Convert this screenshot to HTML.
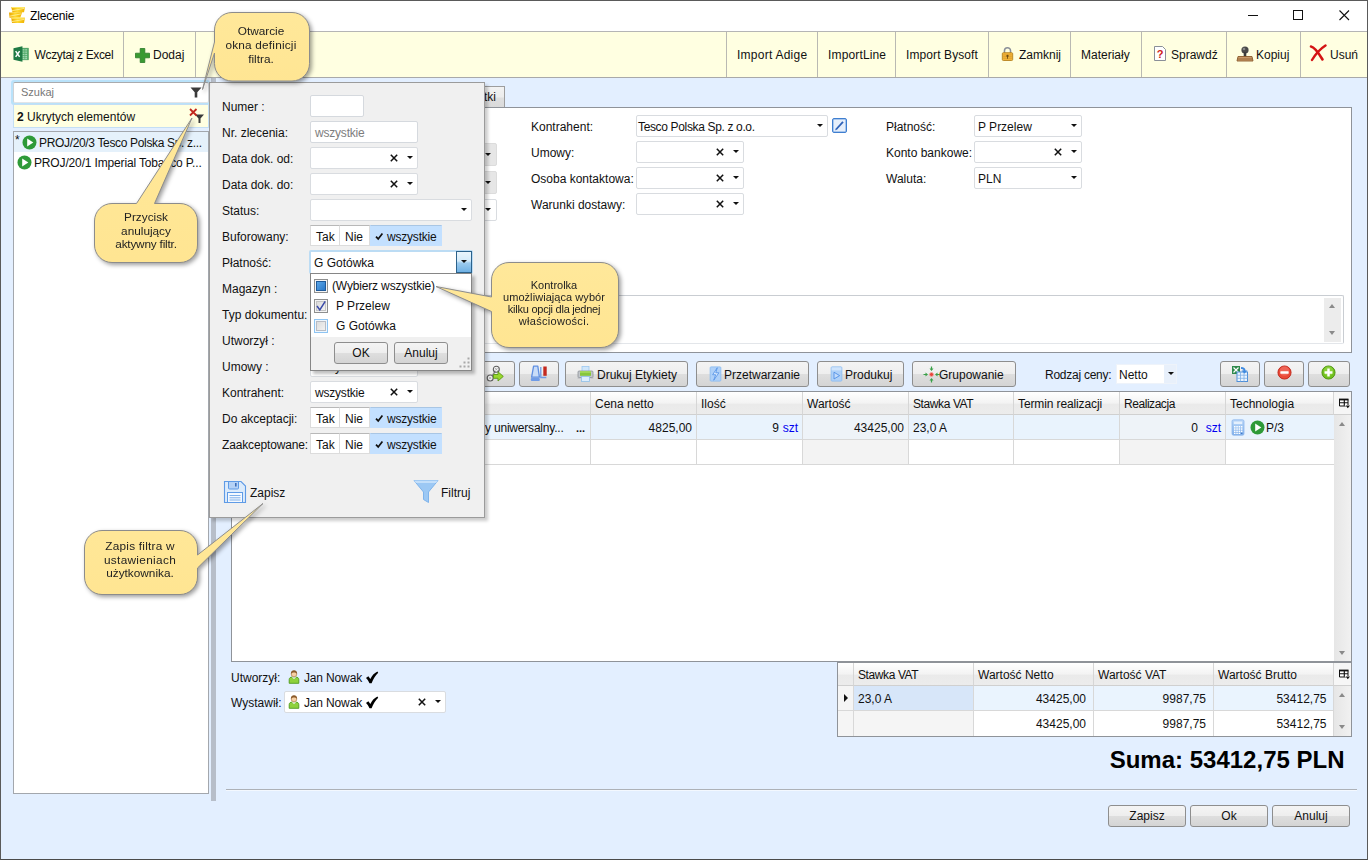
<!DOCTYPE html>
<html><head><meta charset="utf-8"><title>Zlecenie</title>
<style>
*{box-sizing:border-box;margin:0;padding:0}
html,body{width:1368px;height:860px;overflow:hidden}
body{font-family:"Liberation Sans",sans-serif;font-size:12px;color:#111;background:#e3efff;position:relative}
.a{position:absolute}
.t{position:absolute;white-space:nowrap;line-height:14px;height:14px}
#win{position:absolute;left:0;top:0;width:1368px;height:860px;border:1px solid #5a5a5a;border-bottom-color:#4a4a4a;pointer-events:none;z-index:50}
#title{position:absolute;left:0;top:0;width:1368px;height:31px;background:#fff}
#tb{position:absolute;left:0;top:31px;width:1368px;height:47px;background:#ffffe1;border-top:1px solid #b5b5b5;border-bottom:1px solid #a9a9a9}
.sep{position:absolute;top:0;width:1px;height:45px;background:#b9b9b3}
.inp{position:absolute;background:#fff;border:1px solid #d5d9de;border-radius:2px}
.cmb{position:absolute;background:#fff;border:1px solid #d9dce0;border-radius:2px}
.arr{position:absolute;width:0;height:0;margin-left:.5px;border-left:3px solid transparent;border-right:3px solid transparent;border-top:3.6px solid #111}
.x{position:absolute;width:10px;height:10px;padding:1px}
.btn{position:absolute;border:1px solid #8e8e8e;border-radius:3px;background:linear-gradient(#f4f4f4 0,#eeeeee 48%,#dedede 52%,#d4d4d4 100%)}
.seg{position:absolute;height:21px;background:#fff;border:1px solid #dcdcdc;border-top-color:#b8b8b8}
.seg.on{background:#c3e0ff;border-color:#c3e0ff;border-top-color:#a9c6e4}
.hd{position:absolute;height:23px;background:linear-gradient(#ffffff 0,#f3f3f3 50%,#eaeaea 56%,#ececec 100%);border-right:1px solid #d6d6d6;border-bottom:1px solid #d0d0d0}
.cell{position:absolute;border-right:1px solid #d8d8d8;border-bottom:1px solid #d8d8d8}
.co{position:absolute;text-align:center;font-size:12px;line-height:13.3px;color:#222;white-space:nowrap;will-change:transform}
</style></head><body>

<!-- ===== title bar ===== -->
<div id="title">
 <svg class="a" style="left:8px;top:6px" width="18" height="18" viewBox="0 0 18 18">
  <defs><linearGradient id="gz" x1="0" y1="0" x2="1" y2="0"><stop offset="0" stop-color="#e9a400"/><stop offset=".45" stop-color="#ffd92e"/><stop offset="1" stop-color="#efb000"/></linearGradient></defs>
  <path d="M3.200 1 H17 L16 6.300 L4.500 6.500z" fill="url(#gz)"/>
  <path d="M1 6.500 L14.200 6.200 L12.300 11.600 L1.500 11.700z" fill="url(#gz)"/>
  <path d="M3.200 11.600 L17 11.800 L16 17 H4z" fill="url(#gz)"/>
  <path d="M3.500 4.800 L16.500 2.300M1.500 10.200 L13.500 7.800M3.800 15.600 L16.500 13.300" stroke="#fff3a0" stroke-width="1" opacity=".8"/>
  <path d="M3.200 1H17l-.2 1H3.500zM3.200 11.600l13.800.2-.2 1H3.400z" fill="#ffe868"/>
 </svg>
 <div class="t" style="left:30px;top:9px;color:#000;letter-spacing:-.12px">Zlecenie</div>
 <div class="a" style="left:1248px;top:15px;width:10px;height:1px;background:#111"></div>
 <div class="a" style="left:1293px;top:10px;width:10px;height:10px;border:1px solid #111"></div>
 <svg class="a" style="left:1339px;top:10px" width="11" height="11" viewBox="0 0 11 11"><path d="M0.5 0.5 L10 10 M10 0.5 L0.5 10" stroke="#111" stroke-width="1.1" fill="none"/></svg>
</div>

<!-- ===== toolbar ===== -->
<div id="tb">
 <div class="sep" style="left:123px"></div><div class="sep" style="left:195px"></div>
 <div class="sep" style="left:726px"></div><div class="sep" style="left:817px"></div><div class="sep" style="left:895px"></div>
 <div class="sep" style="left:988px"></div><div class="sep" style="left:1070px"></div><div class="sep" style="left:1141px"></div>
 <div class="sep" style="left:1226px"></div><div class="sep" style="left:1300px"></div>
 <!-- excel icon -->
 <svg class="a" style="left:13px;top:14px" width="16" height="16" viewBox="0 0 17 17">
  <rect x="8" y="2.300" width="8.300" height="12.400" fill="#4ea866" stroke="#3c9456" stroke-width=".6"/>
  <path d="M10 4.200h5M10 6.600h5M10 9h5M10 11.400h5M10 13.400h5" stroke="#a5d8b2" stroke-width="1.400"/>
  <path d="M12.500 3v11" stroke="#4ea866" stroke-width=".7"/>
  <path d="M0.500 2.300 L10 0.300 V16.700 L0.500 14.700 Z" fill="#1f7a44"/>
  <path d="M2.800 5.500 L7 11.600 M7 5.500 L2.800 11.600" stroke="#fff" stroke-width="1.600"/>
 </svg>
 <div class="t" style="left:34.500px;top:16px;letter-spacing:-.35px">Wczytaj z Excel</div>
 <svg class="a" style="left:135px;top:16px" width="15" height="15" viewBox="0 0 15 15"><path d="M5.2 0.5h4.6v4.7h4.7v4.6h-4.7v4.7H5.2V9.8H0.5V5.2h4.7z" fill="#3a9a32" stroke="#2a7a28" stroke-width=".8"/></svg>
 <div class="t" style="left:153px;top:16px">Dodaj</div>
 <div class="t" style="left:737px;top:16px;letter-spacing:.25px">Import Adige</div>
 <div class="t" style="left:828px;top:16px;letter-spacing:.15px">ImportLine</div>
 <div class="t" style="left:906px;top:16px;letter-spacing:.1px">Import Bysoft</div>
 <!-- lock -->
 <svg class="a" style="left:1001px;top:14px" width="13" height="16" viewBox="0 0 15 18">
  <path d="M4 8 V5.2 a3.5 3.5 0 0 1 7 0 V8" fill="none" stroke="#8a8f98" stroke-width="1.8"/>
  <rect x="1.5" y="7.5" width="12" height="9" rx="1.2" fill="#f2b43a" stroke="#b57f1c" stroke-width="1"/>
  <path d="M2.5 10h10M2.5 12h10M2.5 14h10" stroke="#d99a28" stroke-width=".8"/>
  <circle cx="7.5" cy="11.3" r="1.3" fill="#6b4a10"/><rect x="7" y="11.5" width="1" height="3" fill="#6b4a10"/>
 </svg>
 <div class="t" style="left:1019px;top:16px">Zamknij</div>
 <div class="t" style="left:1081px;top:16px">Materiały</div>
 <!-- help doc -->
 <svg class="a" style="left:1153px;top:13px" width="14" height="17" viewBox="0 0 14 17">
  <path d="M1.5 1.5h8l3 3v11h-11z" fill="#fff" stroke="#8a8f98" stroke-width="1"/>
  <text x="7" y="12.5" font-family="Liberation Sans" font-weight="bold" font-size="11" fill="#d01818" text-anchor="middle">?</text>
 </svg>
 <div class="t" style="left:1171px;top:16px">Sprawdź</div>
 <!-- stamp -->
 <svg class="a" style="left:1236px;top:13px" width="18" height="18" viewBox="0 0 18 18">
  <circle cx="9" cy="5" r="3.6" fill="#4a4a4a"/><circle cx="8" cy="4" r="1.3" fill="#8a8a8a"/>
  <rect x="7.7" y="7" width="2.6" height="5" fill="#3c3c3c"/>
  <path d="M2 11.5h14l1 4.5H1z" fill="#c99a6a" stroke="#8a5a2a" stroke-width=".9"/>
  <path d="M1.5 14h15" stroke="#8a5a2a" stroke-width=".8"/>
 </svg>
 <div class="t" style="left:1256px;top:16px">Kopiuj</div>
 <!-- red X -->
 <svg class="a" style="left:1309px;top:12px" width="19" height="18" viewBox="0 0 19 18">
  <path d="M2 2.5 C5 3 9 8 13.5 15.5" stroke="#d41414" stroke-width="2.6" fill="none" stroke-linecap="round"/>
  <path d="M16.5 1.5 C11 5 6 11 3 16" stroke="#d41414" stroke-width="2.4" fill="none" stroke-linecap="round"/>
 </svg>
 <div class="t" style="left:1330px;top:16px">Usuń</div>
</div>

<!-- ===== left panel ===== -->
<div class="a" style="left:11px;top:80px;width:199px;height:25px;background:#b9e2fa;border-radius:3px"></div>
<div class="a" style="left:13px;top:82px;width:196px;height:21px;background:#fff;border:1px solid #cfd2d6;border-top-color:#a9abae;border-bottom-color:#e2e4e8;border-radius:2px"></div>
<div class="t" style="left:21px;top:85px;color:#777;font-size:11px">Szukaj</div>
<svg class="a" style="left:190px;top:87px" width="12" height="11" viewBox="0 0 12 11"><path d="M0.5 0.5h11L7.3 5.2V10.5H4.7V5.2z" fill="#3a3a3a"/></svg>
<div class="a" style="left:13px;top:104px;width:196px;height:24px;background:#ffffe1;border:1px solid #c4def4"></div>
<div class="t" style="left:17px;top:110px"><b>2</b> Ukrytych elementów</div>
<svg class="a" style="left:189px;top:108px" width="16" height="16" viewBox="0 0 16 16">
 <path d="M6 6.5h9L11.5 10.5V15h-2V10.5z" fill="#3a3a3a"/>
 <path d="M1 1 L7.500 7.500 M7.500 1 L1 7.500" stroke="#c2281e" stroke-width="1.800"/>
</svg>
<div class="a" style="left:13px;top:131px;width:196px;height:663px;background:#fff;border:1px solid #a3a7ad"></div>
<div class="a" style="left:14px;top:132px;width:194px;height:20px;background:#e5f1fb"></div>
<div class="t" style="left:15px;top:133px">*</div>
<svg class="a" style="left:22px;top:135px" width="15" height="15" viewBox="0 0 15 15"><circle cx="7.5" cy="7.5" r="7" fill="#2e9a38"/><path d="M5.2 3.6 L11.3 7.5 L5.2 11.4 Z" fill="#fff"/></svg>
<div class="t" style="left:39px;top:136px;letter-spacing:-.34px">PROJ/20/3 Tesco Polska Sp. z...</div>
<svg class="a" style="left:17px;top:154.500px" width="15" height="15" viewBox="0 0 15 15"><circle cx="7.5" cy="7.5" r="7" fill="#2e9a38"/><path d="M5.2 3.6 L11.3 7.5 L5.2 11.4 Z" fill="#fff"/></svg>
<div class="t" style="left:34px;top:156px;letter-spacing:-.15px">PROJ/20/1 Imperial Tobacco P...</div>
<!-- splitter -->
<div class="a" style="left:211px;top:78px;width:5px;height:723px;background:#b7bec9"></div>

<!--MAIN-S-->
<!-- ===== main area ===== -->
<!-- tab -->
<div class="a" style="left:440px;top:86px;width:65px;height:22px;background:linear-gradient(#f2f2f2 0,#ececec 48%,#dfdfdf 52%,#dadada 100%);border:1px solid #9d9d9d;border-bottom:none"></div>
<div class="t" style="left:484px;top:90px">tki</div>
<!-- white form panel -->
<div class="a" style="left:231px;top:107px;width:1121px;height:246px;background:#fff;border:1px solid #8f9399"></div>
<!-- hidden combos peeking -->
<div class="a" style="left:400px;top:143px;width:97px;height:23px;background:#e6e6e6;border:1px solid #dcdcdc;border-radius:2px"></div><div class="arr" style="left:484px;top:153px"></div>
<div class="a" style="left:400px;top:171px;width:97px;height:23px;background:#e6e6e6;border:1px solid #dcdcdc;border-radius:2px"></div><div class="arr" style="left:484px;top:181px"></div>
<div class="cmb" style="left:400px;top:199px;width:97px;height:22px"></div><div class="arr" style="left:484px;top:208px"></div>
<!-- labels col 1 -->
<div class="t" style="left:531px;top:120px">Kontrahent:</div>
<div class="t" style="left:531px;top:146px">Umowy:</div>
<div class="t" style="left:531px;top:172px">Osoba kontaktowa:</div>
<div class="t" style="left:531px;top:198px">Warunki dostawy:</div>
<div class="cmb" style="left:636px;top:115px;width:192px;height:22px"></div>
<div class="t" style="left:638px;top:120px;letter-spacing:-.35px">Tesco Polska Sp. z o.o.</div>
<div class="arr" style="left:816px;top:124px"></div>
<div class="a" style="left:832px;top:118px;width:15px;height:15px;background:#e6effb;border:1px solid #3f7fd0;border-radius:2px;box-shadow:inset 0 0 0 .5px #6fa0e0"></div>
<svg class="a" style="left:832px;top:118px" width="15" height="15" viewBox="0 0 15 15"><path d="M4 11.5 L11 3.8" stroke="#2f62b8" stroke-width="1.8"/><path d="M3.2 12.3 l1.4-.4 -1-1z" fill="#2f62b8"/></svg>
<!-- Umowy/Osoba/Warunki combos -->
<div class="cmb" style="left:636px;top:141px;width:108px;height:22px"></div>
<div class="cmb" style="left:636px;top:167px;width:108px;height:22px"></div>
<div class="cmb" style="left:636px;top:193px;width:108px;height:22px"></div>
<svg class="x" style="left:715px;top:147px" viewBox="0 0 10 10"><path d="M1 1L9 9M9 1L1 9" stroke="#111" stroke-width="1.9"/></svg><div class="arr" style="left:732px;top:150px"></div>
<svg class="x" style="left:715px;top:173px" viewBox="0 0 10 10"><path d="M1 1L9 9M9 1L1 9" stroke="#111" stroke-width="1.9"/></svg><div class="arr" style="left:732px;top:176px"></div>
<svg class="x" style="left:715px;top:199px" viewBox="0 0 10 10"><path d="M1 1L9 9M9 1L1 9" stroke="#111" stroke-width="1.9"/></svg><div class="arr" style="left:732px;top:202px"></div>
<!-- labels col 2 -->
<div class="t" style="left:886px;top:120px">Płatność:</div>
<div class="t" style="left:886px;top:146px">Konto bankowe:</div>
<div class="t" style="left:886px;top:172px">Waluta:</div>
<div class="cmb" style="left:974px;top:115px;width:108px;height:22px"></div>
<div class="cmb" style="left:974px;top:141px;width:108px;height:22px"></div>
<div class="cmb" style="left:974px;top:167px;width:108px;height:22px"></div>
<div class="t" style="left:978px;top:120px">P Przelew</div><div class="arr" style="left:1070px;top:124px"></div>
<svg class="x" style="left:1053px;top:147px" viewBox="0 0 10 10"><path d="M1 1L9 9M9 1L1 9" stroke="#111" stroke-width="1.9"/></svg><div class="arr" style="left:1070px;top:150px"></div>
<div class="t" style="left:978px;top:172px">PLN</div><div class="arr" style="left:1070px;top:176px"></div>
<!-- textarea -->
<div class="a" style="left:240px;top:295px;width:1104px;height:49px;background:#fff;border:1px solid #c9cdd2;border-bottom-color:#e3e6ea;border-radius:2px"></div>
<div class="a" style="left:1324px;top:298px;width:17px;height:44px;background:#ececec"></div>
<div class="a" style="left:1329px;top:304px;width:0;height:0;border-left:3.5px solid transparent;border-right:3.5px solid transparent;border-bottom:4px solid #8a8a8a"></div>
<div class="a" style="left:1329px;top:331px;width:0;height:0;border-left:3.5px solid transparent;border-right:3.5px solid transparent;border-top:4px solid #8a8a8a"></div>

<!-- ===== button row ===== -->
<div class="btn" style="left:470px;top:361px;width:45px;height:26px"></div>
<svg class="a" style="left:486px;top:365px" width="20" height="18" viewBox="0 0 20 18">
 <path d="M5 12.500L9.500 6" stroke="#8a8a8a" stroke-width="1.400"/>
 <circle cx="10.300" cy="4.300" r="3" fill="#f2f2f2" stroke="#5e5e5e" stroke-width="1.100"/><path d="M9 3l2.600 2.600M11.600 3L9 5.600" stroke="#9a9a9a" stroke-width=".7"/>
 <circle cx="4.200" cy="13" r="3" fill="#f2f2f2" stroke="#5e5e5e" stroke-width="1.100"/><path d="M2.900 11.700l2.600 2.600M5.500 11.700l-2.600 2.600" stroke="#9a9a9a" stroke-width=".7"/>
 <path d="M7.500 9.500h4.500V6.800l5.300 4.600-5.300 4.600v-2.700H7.500z" fill="#9ad82e" stroke="#5a9a14" stroke-width=".9" stroke-linejoin="round"/>
</svg>
<div class="btn" style="left:519px;top:361px;width:40px;height:26px"></div>
<svg class="a" style="left:530px;top:365px" width="18" height="18" viewBox="0 0 18 18">
 <path d="M3.600 1.200h4.200l1.600 11h-7.800z" fill="#c9dcf8" stroke="#5f8fe2" stroke-width="1.300" stroke-linejoin="round"/>
 <rect x="0.800" y="13" width="9" height="3" rx="1" fill="#6f9be6"/>
 <path d="M10.800 2v10.500h5.500" fill="none" stroke="#6f9be6" stroke-width="1.300"/>
 <rect x="13.300" y="1.500" width="3.400" height="9.300" fill="#c4281e"/>
</svg>
<div class="btn" style="left:565px;top:361px;width:123px;height:26px"></div>
<svg class="a" style="left:577px;top:366px" width="17" height="16" viewBox="0 0 17 16">
 <rect x="5" y="0.500" width="7" height="5.500" fill="#cfe6fb" stroke="#9cc8f0" stroke-width=".8"/>
 <rect x="1" y="5" width="15" height="6.500" rx="1" fill="#c3c7cc" stroke="#8a8f96" stroke-width=".8"/>
 <rect x="3" y="5.200" width="11" height="4.600" fill="#86c63c"/>
 <rect x="3" y="5.200" width="11" height="1.600" fill="#a6da5c"/>
 <rect x="4.500" y="10.500" width="8" height="5" fill="#dcedfd" stroke="#8fbfe8" stroke-width=".8"/>
 <path d="M0.500 12h3M13.500 12h3" stroke="#a8acb2" stroke-width=".8"/>
</svg>
<div class="t" style="left:597px;top:368px">Drukuj Etykiety</div>
<div class="btn" style="left:696px;top:361px;width:113px;height:26px"></div>
<svg class="a" style="left:709px;top:366px" width="13" height="16" viewBox="0 0 14 18">
 <rect x="1" y="1" width="12" height="16" rx="1" fill="#aed0f8" stroke="#8cbcf2" stroke-width="1"/>
 <path d="M9 2 L3.800 9.800h3.400L5 16 L10.800 7.600H7.300z" fill="#d8e9fd" stroke="#4f8fe6" stroke-width=".9" stroke-linejoin="round"/>
</svg>
<div class="t" style="left:724px;top:368px">Przetwarzanie</div>
<div class="btn" style="left:817px;top:361px;width:87px;height:26px"></div>
<svg class="a" style="left:830px;top:366px" width="13" height="16" viewBox="0 0 14 18">
 <rect x="1" y="1" width="12" height="16" rx="1" fill="#aed0f8" stroke="#8cbcf2" stroke-width="1"/>
 <rect x="1.500" y="1.500" width="11" height="3.500" fill="#cfe4fc"/>
 <path d="M4.200 7 L10.500 10.800 L4.200 14.600z" fill="#c4dcfa" stroke="#4f8fe6" stroke-width="1"/>
</svg>
<div class="t" style="left:845px;top:368px">Produkuj</div>
<div class="btn" style="left:912px;top:361px;width:104px;height:26px"></div>
<svg class="a" style="left:923px;top:366px" width="17" height="17" viewBox="0 0 17 17">
 <circle cx="8.500" cy="8.500" r="2" fill="#e8463c" stroke="#f4a8a0" stroke-width=".8"/>
 <g fill="#3aa048"><path d="M7.900 0.500h1.200v2h1.400L8.500 5 6.500 2.500h1.400z"/><path d="M7.900 16.500h1.200v-2h1.400L8.500 12 6.500 14.500h1.400z"/><path d="M0.500 7.900v1.200h2v1.400L5 8.500 2.500 6.500v1.400z"/><path d="M16.500 7.900v1.200h-2v1.400L12 8.500l2.500-2v1.400z"/></g>
</svg>
<div class="t" style="left:939px;top:368px">Grupowanie</div>
<div class="t" style="left:1045px;top:368px;letter-spacing:-.25px">Rodzaj ceny:</div>
<div class="a" style="left:1116px;top:364px;width:61px;height:20px;background:#fff;border:1px solid #eef3fa"></div>
<div class="a" style="left:1164px;top:365px;width:12px;height:18px;background:#e8f0fb"></div>
<div class="t" style="left:1119px;top:368px">Netto</div><div class="arr" style="left:1167px;top:372px"></div>
<div class="btn" style="left:1220px;top:361px;width:40px;height:26px"></div>
<svg class="a" style="left:1231px;top:365px" width="18" height="18" viewBox="0 0 18 18">
 <rect x="1" y="1" width="8" height="8" fill="#2f8a4c"/><path d="M2.5 2.5l5 5M7.5 2.5l-5 5" stroke="#fff" stroke-width="1.2"/>
 <rect x="6" y="7" width="10.5" height="9.5" fill="#eaf4ff" stroke="#4f8fd8" stroke-width="1"/>
 <path d="M6 10.2h10.5M6 13.3h10.5M9.5 7v9.5M13 7v9.5" stroke="#7fb0e6" stroke-width=".8"/>
 <path d="M10 2c3 0 4.5 1.2 4.5 3.5h2l-3 3-3-3h2c0-1-.8-1.5-2.5-1.5z" fill="#3f8ae0"/>
</svg>
<div class="btn" style="left:1264px;top:361px;width:40px;height:26px"></div>
<svg class="a" style="left:1277px;top:365px" width="15" height="15" viewBox="0 0 16 16"><circle cx="8" cy="8" r="7" fill="#ea4a38" stroke="#c0281c" stroke-width="1"/><circle cx="8" cy="6.5" r="5" fill="#f2766a" opacity=".6"/><rect x="3.6" y="6.6" width="8.8" height="2.8" rx=".6" fill="#fff"/></svg>
<div class="btn" style="left:1308px;top:361px;width:42px;height:26px"></div>
<svg class="a" style="left:1321px;top:365px" width="15" height="15" viewBox="0 0 16 16"><circle cx="8" cy="8" r="7" fill="#72c020" stroke="#4e9410" stroke-width="1"/><circle cx="8" cy="6.5" r="5" fill="#9ada4a" opacity=".6"/><path d="M6.7 3.8h2.6v2.9h2.9v2.6H9.3v2.9H6.7V9.3H3.8V6.7h2.9z" fill="#fff"/></svg>

<!-- ===== grid ===== -->
<div class="a" style="left:231px;top:391px;width:1121px;height:271px;background:#fff;border:1px solid #8f9399"></div>
<div class="hd" style="left:232px;top:392px;width:359px"></div>
<div class="hd" style="left:591px;top:392px;width:106px"></div>
<div class="hd" style="left:697px;top:392px;width:106px"></div>
<div class="hd" style="left:803px;top:392px;width:106px"></div>
<div class="hd" style="left:909px;top:392px;width:105px"></div>
<div class="hd" style="left:1014px;top:392px;width:106px"></div>
<div class="hd" style="left:1120px;top:392px;width:106px"></div>
<div class="hd" style="left:1226px;top:392px;width:108px"></div>
<div class="hd" style="left:1334px;top:392px;width:17px;border-right:none;background:#f6f6f6"></div>
<div class="t" style="left:595px;top:397px">Cena netto</div>
<div class="t" style="left:701px;top:397px">Ilość</div>
<div class="t" style="left:807px;top:397px">Wartość</div>
<div class="t" style="left:913px;top:397px;letter-spacing:-.4px">Stawka VAT</div>
<div class="t" style="left:1018px;top:397px;letter-spacing:-.12px">Termin realizacji</div>
<div class="t" style="left:1124px;top:397px;letter-spacing:-.45px">Realizacja</div>
<div class="t" style="left:1230px;top:397px">Technologia</div>
<svg class="a" style="left:1339px;top:398px" width="12" height="11" viewBox="0 0 12 11"><path d="M0.500 1.500h8.500v6.500h-8.500z" fill="#fff" stroke="#111" stroke-width="1"/><path d="M0 1.500h9.500" stroke="#111" stroke-width="1.800"/><path d="M0.500 4.700h8.500M5.300 1.500v6.500" stroke="#111" stroke-width="1.150"/><path d="M5.500 7h6.500l-3.250 3.800z" fill="#fff"/><path d="M6.600 7.600h4.400L8.800 10.200z" fill="#111"/></svg>
<!-- row 1 -->
<div class="a" style="left:232px;top:415px;width:1102px;height:24px;background:#e9f3fd"></div>
<div class="cell" style="left:232px;top:415px;width:359px;height:25px"></div>
<div class="cell" style="left:591px;top:415px;width:106px;height:25px"></div>
<div class="cell" style="left:697px;top:415px;width:106px;height:25px"></div>
<div class="cell" style="left:803px;top:415px;width:106px;height:25px;background:#eef3f8"></div>
<div class="cell" style="left:909px;top:415px;width:105px;height:25px"></div>
<div class="cell" style="left:1014px;top:415px;width:106px;height:25px"></div>
<div class="cell" style="left:1120px;top:415px;width:106px;height:25px;background:#eef3f8"></div>
<div class="cell" style="left:1226px;top:415px;width:108px;height:25px;border-right:none"></div>
<div class="t" style="left:485px;top:421px;letter-spacing:-.2px">y uniwersalny...</div><div class="t" style="left:576px;top:421px;font-weight:bold;font-size:11px">...</div>
<div class="t" style="right:676px;top:421px">4825,00</div>
<div class="t" style="right:589px;top:421px">9</div><div class="t" style="right:570px;top:421px;color:#0000f0">szt</div>
<div class="t" style="right:464px;top:421px">43425,00</div>
<div class="t" style="left:913px;top:421px">23,0 A</div>
<div class="t" style="right:170px;top:421px">0</div><div class="t" style="right:147px;top:421px;color:#0000f0">szt</div>
<svg class="a" style="left:1231px;top:419px" width="14" height="17" viewBox="0 0 14 17">
 <defs><linearGradient id="cal" x1="0" y1="0" x2="0" y2="1"><stop offset="0" stop-color="#b9d6f8"/><stop offset="1" stop-color="#7fb0ea"/></linearGradient></defs>
 <rect x="1" y="0.800" width="12" height="15.400" rx="1.500" fill="url(#cal)" stroke="#8fb8ec" stroke-width=".8"/>
 <rect x="2.800" y="2.500" width="8.400" height="2.600" fill="#e4f0fd"/>
 <g fill="#fff"><rect x="3" y="7" width="1.500" height="1.500"/><rect x="5.300" y="7" width="1.500" height="1.500"/><rect x="7.600" y="7" width="1.500" height="1.500"/><rect x="9.900" y="7" width="1.500" height="1.500"/>
 <rect x="3" y="9.300" width="1.500" height="1.500"/><rect x="5.300" y="9.300" width="1.500" height="1.500"/><rect x="7.600" y="9.300" width="1.500" height="1.500"/><rect x="9.900" y="9.300" width="1.500" height="1.500"/>
 <rect x="3" y="11.600" width="1.500" height="1.500"/><rect x="5.300" y="11.600" width="1.500" height="1.500"/><rect x="7.600" y="11.600" width="1.500" height="1.500"/><rect x="9.900" y="11.600" width="1.500" height="1.500"/>
 <rect x="3" y="13.800" width="1.500" height="1.200"/><rect x="5.300" y="13.800" width="1.500" height="1.200"/><rect x="7.600" y="13.800" width="1.500" height="1.200"/></g><rect x="9.900" y="13.800" width="1.500" height="1.200" fill="#3f78c8"/>
</svg>
<svg class="a" style="left:1250px;top:419.500px" width="15" height="15" viewBox="0 0 15 15"><circle cx="7.5" cy="7.5" r="7" fill="#2e9a38"/><path d="M5.2 3.6 L11.3 7.5 L5.2 11.4 Z" fill="#fff"/></svg>
<div class="t" style="left:1266px;top:421px">P/3</div>
<!-- row 2 -->
<div class="cell" style="left:232px;top:440px;width:359px;height:25px"></div>
<div class="cell" style="left:591px;top:440px;width:106px;height:25px"></div>
<div class="cell" style="left:697px;top:440px;width:106px;height:25px"></div>
<div class="cell" style="left:803px;top:440px;width:106px;height:25px;background:#f3f3f3"></div>
<div class="cell" style="left:909px;top:440px;width:105px;height:25px"></div>
<div class="cell" style="left:1014px;top:440px;width:106px;height:25px"></div>
<div class="cell" style="left:1120px;top:440px;width:106px;height:25px;background:#f3f3f3"></div>
<div class="cell" style="left:1226px;top:440px;width:108px;height:25px;border-right:none"></div>
<!-- v scrollbar -->
<div class="a" style="left:1334px;top:415px;width:17px;height:246px;background:linear-gradient(90deg,#e6e6e6,#f1f1f1)"></div>
<div class="a" style="left:1339px;top:422px;width:0;height:0;border-left:3.5px solid transparent;border-right:3.5px solid transparent;border-bottom:4px solid #8a8a8a"></div>
<div class="a" style="left:1339px;top:651px;width:0;height:0;border-left:3.5px solid transparent;border-right:3.5px solid transparent;border-top:4px solid #8a8a8a"></div>

<!-- ===== bottom left ===== -->
<div class="t" style="left:231px;top:671px">Utworzył:</div>
<svg class="a" style="left:288px;top:670px" width="12" height="14" viewBox="0 0 12 14"><circle cx="6" cy="4" r="2.800" fill="#f6cfa3" stroke="#b07b45" stroke-width=".7"/><path d="M2.900 3.900C2.700 1.300 4.400 0.300 6 0.300S9.300 1.300 9.100 3.900C8.300 2.800 7.200 2.500 6 2.500S3.700 2.800 2.900 3.900z" fill="#8a5a2a"/><path d="M1.200 13.300V9.600c0-1.800 1.400-2.500 2.900-2.500L6 8.700 7.900 7.100c1.500 0 2.900.7 2.900 2.500v3.700z" fill="#8ed13c" stroke="#4e9a1c" stroke-width=".9" stroke-linejoin="round"/><path d="M4.100 7.200L6 8.900 7.900 7.200" fill="none" stroke="#e8f6d8" stroke-width=".8"/></svg>
<div class="t" style="left:304px;top:671px;letter-spacing:-.15px">Jan Nowak</div>
<svg class="a" style="left:364.500px;top:670.500px" width="14" height="13" viewBox="0 0 15 14"><path d="M1 7.600 L3.600 5.600 L5.700 8.600 C7.400 5.200 9.800 2.300 13.300 0.600 L14.200 1.800 C11 4.700 8.800 8.600 7.100 13.200 L4.800 13.200 C3.800 10.900 2.500 9.100 1 7.600z" fill="#000"/></svg>
<div class="t" style="left:231px;top:696px">Wystawił:</div>
<div class="cmb" style="left:284px;top:691px;width:162px;height:22px"></div>
<svg class="a" style="left:288px;top:695px" width="12" height="14" viewBox="0 0 12 14"><circle cx="6" cy="4" r="2.800" fill="#f6cfa3" stroke="#b07b45" stroke-width=".7"/><path d="M2.900 3.900C2.700 1.300 4.400 0.300 6 0.300S9.300 1.300 9.100 3.900C8.300 2.800 7.200 2.500 6 2.500S3.700 2.800 2.900 3.900z" fill="#8a5a2a"/><path d="M1.200 13.300V9.600c0-1.800 1.400-2.500 2.900-2.500L6 8.700 7.900 7.100c1.500 0 2.900.7 2.900 2.500v3.700z" fill="#8ed13c" stroke="#4e9a1c" stroke-width=".9" stroke-linejoin="round"/><path d="M4.100 7.200L6 8.900 7.900 7.200" fill="none" stroke="#e8f6d8" stroke-width=".8"/></svg>
<div class="t" style="left:304px;top:696px;letter-spacing:-.15px">Jan Nowak</div>
<svg class="a" style="left:364.500px;top:695.500px" width="14" height="13" viewBox="0 0 15 14"><path d="M1 7.600 L3.600 5.600 L5.700 8.600 C7.400 5.200 9.800 2.300 13.300 0.600 L14.200 1.800 C11 4.700 8.800 8.600 7.100 13.200 L4.800 13.200 C3.800 10.900 2.500 9.100 1 7.600z" fill="#000"/></svg>
<svg class="x" style="left:417px;top:697px" viewBox="0 0 10 10"><path d="M1 1L9 9M9 1L1 9" stroke="#111" stroke-width="1.9"/></svg><div class="arr" style="left:434px;top:700px"></div>

<!-- ===== VAT grid ===== -->
<div class="a" style="left:837px;top:662px;width:515px;height:75px;background:#fff;border:1px solid #8f9399"></div>
<div class="hd" style="left:838px;top:663px;width:16px"></div>
<div class="hd" style="left:854px;top:663px;width:120px"></div>
<div class="hd" style="left:974px;top:663px;width:120px"></div>
<div class="hd" style="left:1094px;top:663px;width:120px"></div>
<div class="hd" style="left:1214px;top:663px;width:120px"></div>
<div class="hd" style="left:1334px;top:663px;width:17px;border-right:none;background:#f6f6f6"></div>
<div class="t" style="left:858px;top:668px;letter-spacing:-.4px">Stawka VAT</div>
<div class="t" style="left:978px;top:668px">Wartość Netto</div>
<div class="t" style="left:1098px;top:668px">Wartość VAT</div>
<div class="t" style="left:1218px;top:668px">Wartość Brutto</div>
<svg class="a" style="left:1339px;top:669px" width="12" height="11" viewBox="0 0 12 11"><path d="M0.500 1.500h8.500v6.500h-8.500z" fill="#fff" stroke="#111" stroke-width="1"/><path d="M0 1.500h9.500" stroke="#111" stroke-width="1.800"/><path d="M0.500 4.700h8.500M5.300 1.500v6.500" stroke="#111" stroke-width="1.150"/><path d="M5.500 7h6.500l-3.250 3.800z" fill="#fff"/><path d="M6.600 7.600h4.400L8.800 10.200z" fill="#111"/></svg>
<div class="cell" style="left:838px;top:686px;width:16px;height:25px;background:#f5f5f5"></div>
<div class="cell" style="left:854px;top:686px;width:120px;height:25px;background:#d7e6f9"></div>
<div class="cell" style="left:974px;top:686px;width:120px;height:25px;background:#eaf4fe"></div>
<div class="cell" style="left:1094px;top:686px;width:120px;height:25px;background:#eaf4fe"></div>
<div class="cell" style="left:1214px;top:686px;width:120px;height:25px;background:#eaf4fe"></div>
<div class="cell" style="left:838px;top:711px;width:16px;height:25px;background:#f5f5f5;border-bottom:none"></div>
<div class="cell" style="left:854px;top:711px;width:120px;height:25px;background:#f5f5f5;border-bottom:none"></div>
<div class="cell" style="left:974px;top:711px;width:120px;height:25px;border-bottom:none"></div>
<div class="cell" style="left:1094px;top:711px;width:120px;height:25px;border-bottom:none"></div>
<div class="cell" style="left:1214px;top:711px;width:120px;height:25px;border-bottom:none"></div>
<div class="a" style="left:1334px;top:686px;width:17px;height:50px;background:linear-gradient(90deg,#e6e6e6,#f1f1f1)"></div>
<div class="a" style="left:1339px;top:693px;width:0;height:0;border-left:3.5px solid transparent;border-right:3.5px solid transparent;border-bottom:4px solid #8a8a8a"></div>
<div class="a" style="left:1339px;top:725px;width:0;height:0;border-left:3.5px solid transparent;border-right:3.5px solid transparent;border-top:4px solid #8a8a8a"></div>
<div class="a" style="left:844px;top:694px;width:0;height:0;border-top:4px solid transparent;border-bottom:4px solid transparent;border-left:4px solid #111"></div>
<div class="t" style="left:858px;top:692px">23,0 A</div>
<div class="t" style="right:282px;top:692px">43425,00</div>
<div class="t" style="right:162px;top:692px">9987,75</div>
<div class="t" style="right:41.500px;top:692px">53412,75</div>
<div class="t" style="right:282px;top:717px">43425,00</div>
<div class="t" style="right:162px;top:717px">9987,75</div>
<div class="t" style="right:41.500px;top:717px">53412,75</div>

<!-- sum -->
<div class="t" style="right:23.500px;top:745px;font-size:24px;font-weight:bold;line-height:30px;height:30px;color:#000">Suma: 53412,75 PLN</div>
<div class="a" style="left:226px;top:789px;width:1131px;height:1px;background:#adb1b7"></div><div class="a" style="left:226px;top:790px;width:1131px;height:1px;background:#f3f8ff"></div>
<div class="btn" style="left:1108px;top:805px;width:78px;height:22px"></div><div class="t" style="left:1108px;top:809px;width:78px;text-align:center">Zapisz</div>
<div class="btn" style="left:1190px;top:805px;width:78px;height:22px"></div><div class="t" style="left:1190px;top:809px;width:78px;text-align:center">Ok</div>
<div class="btn" style="left:1272px;top:805px;width:78px;height:22px"></div><div class="t" style="left:1272px;top:809px;width:78px;text-align:center">Anuluj</div>
<!--MAIN-E-->
<!--POPUP-S-->
<!-- ===== filter popup ===== -->
<div class="a" style="left:209px;top:82px;width:276px;height:436px;background:#f0f0f0;border:1px solid #9b9b9b;box-shadow:3px 3px 3px rgba(0,0,0,.2)"></div>
<div class="t" style="left:222px;top:100px">Numer :</div>
<div class="t" style="left:222px;top:126px">Nr. zlecenia:</div>
<div class="t" style="left:222px;top:152px">Data dok. od:</div>
<div class="t" style="left:222px;top:178px">Data dok. do:</div>
<div class="t" style="left:222px;top:204px">Status:</div>
<div class="t" style="left:222px;top:230px">Buforowany:</div>
<div class="t" style="left:222px;top:256px">Płatność:</div>
<div class="t" style="left:222px;top:282px">Magazyn :</div>
<div class="t" style="left:222px;top:308px">Typ dokumentu:</div>
<div class="t" style="left:222px;top:334px">Utworzył :</div>
<div class="t" style="left:222px;top:360px">Umowy :</div>
<div class="t" style="left:222px;top:386px">Kontrahent:</div>
<div class="t" style="left:222px;top:412px">Do akceptacji:</div>
<div class="t" style="left:222px;top:438px;letter-spacing:-.15px">Zaakceptowane:</div>
<div class="inp" style="left:310px;top:95px;width:54px;height:22px"></div>
<div class="inp" style="left:310px;top:121px;width:108px;height:22px"></div>
<div class="t" style="left:315px;top:126px;color:#7d7d7d;letter-spacing:-.2px">wszystkie</div>
<div class="cmb" style="left:310px;top:147px;width:108px;height:22px"></div>
<svg class="x" style="left:389px;top:153px" viewBox="0 0 10 10"><path d="M1 1L9 9M9 1L1 9" stroke="#111" stroke-width="1.9"/></svg><div class="arr" style="left:406px;top:156px"></div>
<div class="cmb" style="left:310px;top:173px;width:108px;height:22px"></div>
<svg class="x" style="left:389px;top:179px" viewBox="0 0 10 10"><path d="M1 1L9 9M9 1L1 9" stroke="#111" stroke-width="1.9"/></svg><div class="arr" style="left:406px;top:182px"></div>
<div class="cmb" style="left:310px;top:199px;width:162px;height:22px"></div><div class="arr" style="left:460px;top:208px"></div>
<!-- Buforowany -->
<div class="seg" style="left:310px;top:225px;width:30px"></div><div class="seg" style="left:339px;top:225px;width:31px"></div><div class="seg on" style="left:370px;top:225px;width:72px"></div>
<div class="t" style="left:316px;top:230px">Tak</div><div class="t" style="left:345px;top:230px">Nie</div>
<svg class="a" style="left:375px;top:232px" width="9" height="9" viewBox="0 0 9 9"><path d="M1 4.6 L3.2 6.9 L7.4 1.4" stroke="#111" stroke-width="1.7" fill="none"/></svg>
<div class="t" style="left:387px;top:230px;letter-spacing:-.2px">wszystkie</div>
<!-- Platnosc combo (focused) -->
<div class="a" style="left:309px;top:250px;width:164px;height:24px;background:#bcdcf4;border-radius:2px"></div>
<div class="a" style="left:311px;top:252px;width:160px;height:21px;background:#fff"></div>
<div class="t" style="left:314px;top:256px">G Gotówka</div>
<div class="a" style="left:456px;top:251px;width:16px;height:22px;border:1px solid #2c628b;background:linear-gradient(#eaf5fc 0,#d4ebfa 45%,#9ccbee 55%,#6fb1e4 100%)"></div>
<div class="arr" style="left:460px;top:260px"></div>
<!-- peeking combos under dropdown -->
<div class="cmb" style="left:310px;top:355px;width:108px;height:22px"></div>
<div class="t" style="left:315px;top:360px;letter-spacing:-.2px">wszystkie</div>
<!-- dropdown -->
<div class="a" style="left:310px;top:273px;width:162px;height:98px;background:#fff;border:1px solid #868686;box-shadow:3px 3px 3px rgba(0,0,0,.25)"></div>
<div class="a" style="left:311px;top:337px;width:160px;height:33px;background:#f0f0f0"></div>
<div class="a" style="left:314px;top:279px;width:14px;height:14px;background:#f4f4f4;border:1px solid #8e8f8f"></div>
<div class="a" style="left:316px;top:281px;width:10px;height:10px;background:linear-gradient(135deg,#5aa6e8,#2a78c8);border:1px solid #1f5a9a"></div>
<div class="a" style="left:314px;top:299px;width:14px;height:14px;background:linear-gradient(135deg,#d6d6d6,#f8f8f8);border:1px solid #8e8f8f;box-shadow:inset 0 0 0 1px #f4f4f4,inset 0 0 0 2px #c4c4c4"></div>
<svg class="a" style="left:315px;top:300px" width="12" height="12" viewBox="0 0 12 12"><path d="M2 6 L4.8 10 L10.2 1.3" stroke="#3a4aa8" stroke-width="1.5" fill="none"/></svg>
<div class="a" style="left:314px;top:319px;width:14px;height:14px;background:linear-gradient(135deg,#d8d8d8,#f6f6f6);border:1px solid #8ec4f2;box-shadow:inset 0 0 0 1px #eef6fd,inset 0 0 0 2px #b8bcc4"></div>
<div class="t" style="left:332px;top:279px;letter-spacing:-.16px">(Wybierz wszystkie)</div>
<div class="t" style="left:336px;top:299px">P Przelew</div>
<div class="t" style="left:336px;top:319px">G Gotówka</div>
<div class="btn" style="left:334px;top:342px;width:54px;height:22px"></div><div class="t" style="left:334px;top:346px;width:54px;text-align:center">OK</div>
<div class="btn" style="left:394px;top:342px;width:54px;height:22px"></div><div class="t" style="left:394px;top:346px;width:54px;text-align:center">Anuluj</div>
<svg class="a" style="left:459px;top:357px" width="12" height="12" viewBox="0 0 12 12"><g fill="#a8a8a8"><rect x="8.500" y="0.500" width="2" height="2"/><rect x="4.500" y="4.500" width="2" height="2"/><rect x="8.500" y="4.500" width="2" height="2"/><rect x="0.500" y="8.500" width="2" height="2"/><rect x="4.500" y="8.500" width="2" height="2"/><rect x="8.500" y="8.500" width="2" height="2"/></g></svg>
<!-- Kontrahent -->
<div class="cmb" style="left:310px;top:381px;width:108px;height:22px"></div>
<div class="t" style="left:315px;top:386px;letter-spacing:-.2px">wszystkie</div>
<svg class="x" style="left:389px;top:387px" viewBox="0 0 10 10"><path d="M1 1L9 9M9 1L1 9" stroke="#111" stroke-width="1.9"/></svg><div class="arr" style="left:406px;top:390px"></div>
<!-- Do akceptacji / Zaakceptowane -->
<div class="seg" style="left:310px;top:407px;width:30px"></div><div class="seg" style="left:339px;top:407px;width:31px"></div><div class="seg on" style="left:370px;top:407px;width:72px"></div>
<div class="t" style="left:316px;top:412px">Tak</div><div class="t" style="left:345px;top:412px">Nie</div>
<svg class="a" style="left:375px;top:414px" width="9" height="9" viewBox="0 0 9 9"><path d="M1 4.6 L3.2 6.9 L7.4 1.4" stroke="#111" stroke-width="1.7" fill="none"/></svg>
<div class="t" style="left:387px;top:412px;letter-spacing:-.2px">wszystkie</div>
<div class="seg" style="left:310px;top:433px;width:30px"></div><div class="seg" style="left:339px;top:433px;width:31px"></div><div class="seg on" style="left:370px;top:433px;width:72px"></div>
<div class="t" style="left:316px;top:438px">Tak</div><div class="t" style="left:345px;top:438px">Nie</div>
<svg class="a" style="left:375px;top:440px" width="9" height="9" viewBox="0 0 9 9"><path d="M1 4.6 L3.2 6.9 L7.4 1.4" stroke="#111" stroke-width="1.7" fill="none"/></svg>
<div class="t" style="left:387px;top:438px;letter-spacing:-.2px">wszystkie</div>
<!-- Zapisz / Filtruj -->
<svg class="a" style="left:223px;top:480px" width="24" height="24" viewBox="0 0 24 24">
 <path d="M1.5 1.500h16.500l4.500 4.500v16.500h-21z" fill="#dcebfb" stroke="#5f9be6" stroke-width="1.1"/>
 <path d="M5.500 1.500h10v6.500a1 1 0 0 1 -1 1h-8a1 1 0 0 1 -1 -1z" fill="#b5d2f6" stroke="#5f9be6" stroke-width="1"/>
 <rect x="12" y="3" width="1.600" height="3.500" fill="#3f6fb8"/>
 <rect x="4.500" y="12.500" width="15" height="10" fill="#f4f9ff" stroke="#5f9be6" stroke-width="1"/>
 <path d="M6.500 15.500h11M6.500 17.800h11M6.500 20h11" stroke="#7fb0ea" stroke-width="1"/>
</svg>
<div class="t" style="left:250px;top:486px">Zapisz</div>
<svg class="a" style="left:413px;top:479px" width="26" height="25" viewBox="0 0 26 25">
 <path d="M1 1.500h24L15.500 13v10.500l-5-3V13z" fill="#9cc8f4" stroke="#7fb4ec" stroke-width="1"/>
 <path d="M1 1.500h24l-2 2.500H3z" fill="#c4dffa"/>
</svg>
<div class="t" style="left:441px;top:486px">Filtruj</div>
<!--POPUP-E-->
<!--CALLOUTS-S-->
<!-- ===== callouts ===== -->
<svg class="a" style="left:0;top:0;z-index:40;filter:drop-shadow(2px 2px 2px rgba(0,0,0,.38))" width="1368" height="860" viewBox="0 0 1368 860">
<defs><linearGradient id="cg" x1="0" y1="0" x2="0" y2="1"><stop offset="0" stop-color="#ffe89a"/><stop offset="1" stop-color="#ffe592"/></linearGradient></defs>
<path d="M232.0 12.5 L292.0 12.5 A17.5 17.5 0 0 1 309.5 30.0 L309.5 63.5 A17.5 17.5 0 0 1 292.0 81 L232.0 81 A17.5 17.5 0 0 1 214.5 63.5 L214.5 53 L202.5 89.5 L214.5 42 L214.5 30.0 A17.5 17.5 0 0 1 232.0 12.5 Z" fill="url(#cg)" stroke="#8c8c8c" stroke-width="1" stroke-linejoin="round"/>
<path d="M112.0 203.5 L136.5 203.5 L192 118 L154.5 203.5 L180.0 203.5 A17.5 17.5 0 0 1 197.5 221.0 L197.5 245.0 A17.5 17.5 0 0 1 180.0 262.5 L112.0 262.5 A17.5 17.5 0 0 1 94.5 245.0 L94.5 221.0 A17.5 17.5 0 0 1 112.0 203.5 Z" fill="url(#cg)" stroke="#8c8c8c" stroke-width="1" stroke-linejoin="round"/>
<path d="M509.0 262.5 L601.0 262.5 A17.5 17.5 0 0 1 618.5 280.0 L618.5 330.0 A17.5 17.5 0 0 1 601.0 347.5 L509.0 347.5 A17.5 17.5 0 0 1 491.5 330.0 L491.5 311.5 L436 286.5 L491.5 297 L491.5 280.0 A17.5 17.5 0 0 1 509.0 262.5 Z" fill="url(#cg)" stroke="#8c8c8c" stroke-width="1" stroke-linejoin="round"/>
<path d="M102.0 530.5 L180.0 530.5 A17.5 17.5 0 0 1 197.5 548.0 L197.5 555 L263 503.5 L197.5 568 L197.5 577.0 A17.5 17.5 0 0 1 180.0 594.5 L102.0 594.5 A17.5 17.5 0 0 1 84.5 577.0 L84.5 548.0 A17.5 17.5 0 0 1 102.0 530.5 Z" fill="url(#cg)" stroke="#8c8c8c" stroke-width="1" stroke-linejoin="round"/>
</svg>
<div class="co" style="left:161.0px;top:25.1px;width:200px;font-size:11.8px;line-height:13.8px;z-index:41">Otwarcie<br><span style="letter-spacing:.2px">okna definicji</span><br>filtra.</div>
<div class="co" style="left:45.5px;top:210.8px;width:200px;font-size:11.8px;line-height:13.6px;z-index:41">Przycisk<br>anulujący<br><span style="letter-spacing:-.2px">aktywny filtr.</span></div>
<div class="co" style="left:453.5px;top:280.1px;width:200px;font-size:11px;line-height:11.9px;z-index:41">Kontrolka<br><span style="letter-spacing:.06px">umożliwiająca wybór</span><br><span style="letter-spacing:-.25px">kilku opcji dla jednej</span><br><span style="letter-spacing:.3px">właściowości.</span></div>
<div class="co" style="left:40.30000000000001px;top:539.9px;width:200px;font-size:11.8px;line-height:13.5px;z-index:41"><span style="letter-spacing:.23px">Zapis filtra w</span><br><span style="letter-spacing:.33px">ustawieniach</span><br>użytkownika.</div>
<!--CALLOUTS-E-->
<div id="win"></div>
</body></html>
